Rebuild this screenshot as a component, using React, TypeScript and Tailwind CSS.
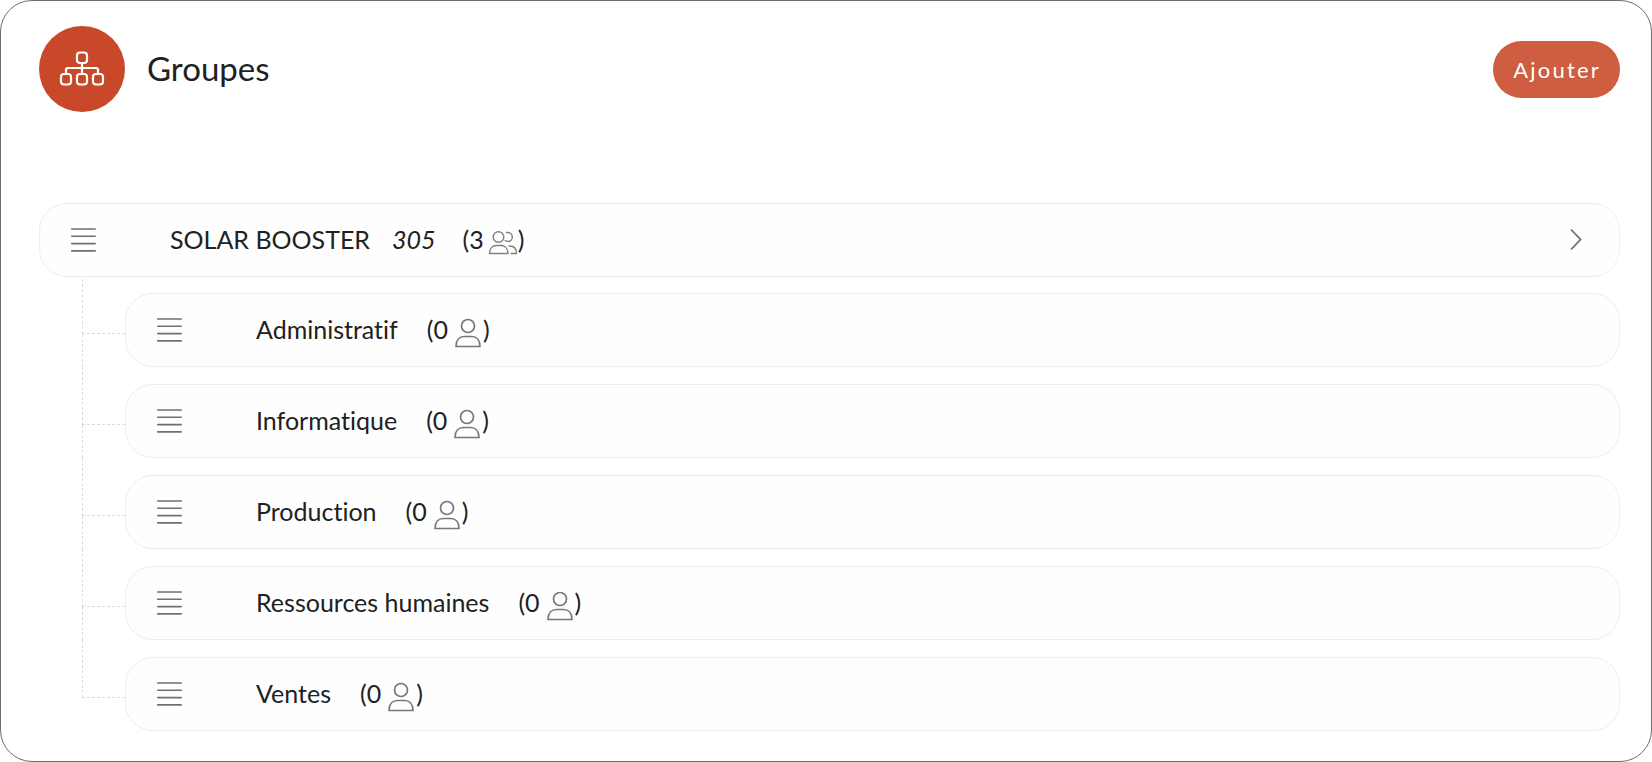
import React from 'react';

interface Group {
  name: string;
  count: number;
}

const ROOT = { name: 'SOLAR BOOSTER', code: '305', count: 3 };

const GROUPS: Group[] = [
  { name: 'Administratif', count: 0 },
  { name: 'Informatique', count: 0 },
  { name: 'Production', count: 0 },
  { name: 'Ressources humaines', count: 0 },
  { name: 'Ventes', count: 0 },
];

const HierarchyIcon = () => (
  <svg width="46" height="36" viewBox="0 0 46 36" fill="none" stroke="currentColor" strokeWidth="2.2" aria-hidden="true">
    <rect x="18" y="1.5" width="10" height="10.5" rx="3" />
    <rect x="2" y="23" width="10" height="10.5" rx="3" />
    <rect x="18" y="23" width="10" height="10.5" rx="3" />
    <rect x="34" y="23" width="10" height="10.5" rx="3" />
    <path d="M23 12v11M7 23v-4a2 2 0 0 1 2-2h28a2 2 0 0 1 2 2v4" />
  </svg>
);

const HandleIcon = () => (
  <svg width="26" height="26" viewBox="0 0 26 26" stroke="currentColor" strokeWidth="1.6" strokeLinecap="round" aria-hidden="true">
    <path d="M1.7 2h23.500M1.7 9.3h23.500M1.7 16.6h23.500M1.7 23.9h23.500" />
  </svg>
);

const UserIcon = () => (
  <svg width="26" height="30" viewBox="0 0 26 30" fill="none" stroke="currentColor" strokeWidth="1.7" strokeLinejoin="round" aria-hidden="true">
    <circle cx="13" cy="8" r="6.5" />
    <path d="M1 28.5c0-6.5 3.5-10 8.5-10h7c5 0 8.5 3.5 8.5 10z" />
  </svg>
);

const UsersIcon = () => (
  <svg width="30" height="26" viewBox="0 0 30 26" fill="none" stroke="currentColor" strokeWidth="1.4" strokeLinejoin="round" aria-hidden="true">
    <circle cx="10.5" cy="7" r="5.3" />
    <path d="M1.5 23.5c0-5 3-8 7-8h4.5c4 0 7 3 7 8z" />
    <path d="M17.8 2.5h2c2.500 0 4.500 2 4.500 4.500s-2 4.500-4.300 4.500c-1.200 0-2.300-.4-3.200-1.200" />
    <path d="M20.5 16h1c4 0 7 2.500 7 7.500h-6" />
  </svg>
);

const rowClass = 'flex h-[74px] flex-1 items-center rounded-[28px] border border-[#ededed] bg-[#fefefe] pr-[37px] pl-[30px]';

const HandleButton: React.FC<{ name: string }> = ({ name }) => (
  <button type="button" aria-label={`Déplacer ${name}`} className="mr-[74px] text-[#6f6f6f]">
    <HandleIcon />
  </button>
);

const App: React.FC = () => {
  return (
    <main className="rounded-[32px] border border-[#6e6e6e] bg-white pt-[25px] pr-[31px] pb-[30px] pl-[38px] font-['Lato',sans-serif] text-[#212121] [font-variant-ligatures:none]">
      <header className="flex items-center">
        <div className="flex size-[86px] items-center justify-center rounded-full bg-[#c84829] text-white">
          <HierarchyIcon />
        </div>
        <h1 className="ml-[22px] pb-0.5 text-[33px] leading-10">Groupes</h1>
        <button type="button" className="ml-auto h-[57px] rounded-full bg-[#ce5d41] pr-[19px] pl-5 text-[22px] tracking-widest text-white">
          Ajouter
        </button>
      </header>

      <section className="mt-[91px] text-[25px] leading-8">
        <div className={rowClass}>
          <HandleButton name={ROOT.name} />
          <span className="pb-0.5">{ROOT.name}</span>
          <em className="ml-[22px] pb-0.5">{ROOT.code}</em>
          <span className="ml-[27px] flex items-center pb-0.5">
            ({ROOT.count}
            <span className="mt-[7px] ml-1 text-[#808080]"><UsersIcon /></span>
            )
          </span>
          <button type="button" aria-label="Ouvrir" className="ml-auto text-[#6f6f6f]">
            <svg width="12" height="24" viewBox="0 0 12 24" fill="none" stroke="currentColor" strokeWidth="1.8" aria-hidden="true">
              <path d="M1 1.500l9.500 10-9.500 10" />
            </svg>
          </button>
        </div>

        <ul className="ml-[43px]">
          {GROUPS.map((group, index) => (
            <li key={group.name} className="flex">
              {/* tree branch to the left of the row */}
              <div className="flex w-[43px] flex-col">
                <div className={`border-b border-l border-dashed border-[#dcdcdc] ${index === 0 ? 'mt-0.5 h-[55px]' : 'h-[58px]'}`} />
                {index < GROUPS.length - 1 && <div className="flex-1 border-l border-dashed border-[#dcdcdc]" />}
              </div>
              <div className={`${rowClass} ${index === 0 ? 'mt-4' : 'mt-[17px]'}`}>
                <HandleButton name={group.name} />
                <span className="pb-0.5">{group.name}</span>
                <span className="ml-[29px] flex items-center pb-0.5">
                  ({group.count}
                  <span className="mt-[7px] mr-0.5 ml-[7px] text-[#777777]"><UserIcon /></span>
                  )
                </span>
              </div>
            </li>
          ))}
        </ul>
      </section>
    </main>
  );
};

export default App;
